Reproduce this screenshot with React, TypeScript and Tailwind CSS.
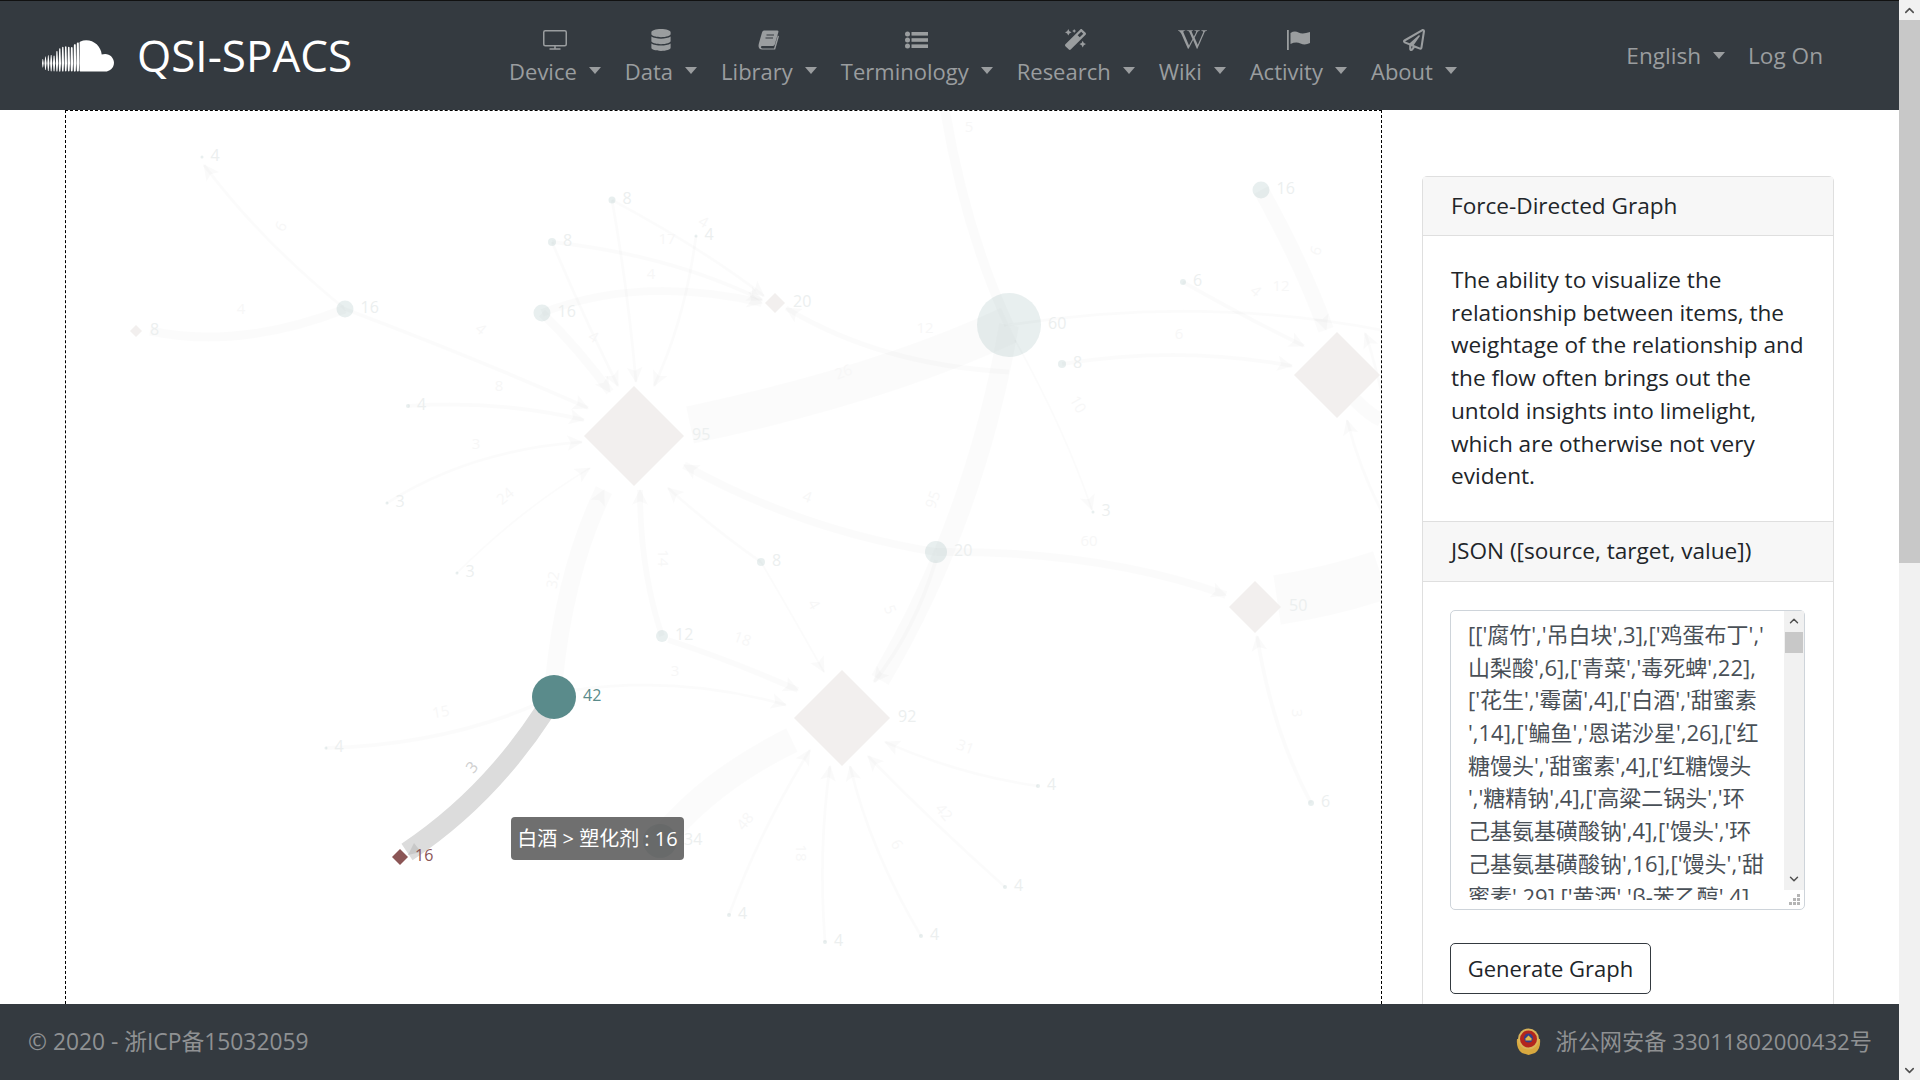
import { ChevronDown, ChevronUp } from "lucide-react";
import type { ReactNode } from "react";
import { FaDatabase, FaMagic, FaRegPaperPlane, FaSoundcloud, FaWikipediaW } from "react-icons/fa";

const DesktopIcon = () => (
    <svg width="24" height="20" viewBox="0 0 24 20" fill="none" stroke="currentColor">
        <rect x="0.75" y="0.75" width="22.5" height="15" rx="1.5" strokeWidth="1.5" />
        <path d="M12 16v2.5M6.5 19h11" strokeWidth="1.6" />
    </svg>
);

const BookIcon = () => (
    <svg width="21" height="20" viewBox="0 0 21 20" fill="currentColor">
        <path d="M6 .5H19.2Q20.8 .5 20.4 2L16.8 14.6Q16.4 16 15 16H4.2Q2.6 16 3 17.4 3.4 18.5 4.6 18.5H16L19.8 5.4 21 6.2 17.2 19.5H4Q1 19.5 .6 16.5 .4 15 1 13L4 2.5Q4.6 .5 6 .5Z" />
        <path d="M8.5 5H16M7.5 8H15" stroke="#343a40" strokeWidth="1.2" />
    </svg>
);

const ListIcon = () => (
    <svg width="23" height="18" viewBox="0 0 23 18" fill="currentColor">
        <circle cx="2.5" cy="3" r="2.5" />
        <circle cx="2.5" cy="9" r="2.5" />
        <circle cx="2.5" cy="15" r="2.5" />
        <rect x="6.5" y="1" width="16.5" height="3.6" />
        <rect x="6.5" y="7.2" width="16.5" height="3.6" />
        <rect x="6.5" y="13.4" width="16.5" height="3.6" />
    </svg>
);

const FlagIcon = () => (
    <svg width="23" height="20" viewBox="0 0 23 20" fill="currentColor">
        <rect x="0" y="0" width="1.8" height="20" />
        <path d="M3.5 3Q7.5 .5 11.5 2.5T23 2V13Q18 15.5 13.5 13.5T3.5 14Z" />
    </svg>
);

const PoliceBadge = () => (
    <svg width="25" height="27" viewBox="0 0 25 27">
        <path d="M1 11Q0 21 6 25L12.5 27 19 25Q25 21 24 11Z" fill="#d8a83f" />
        <circle cx="12.5" cy="11" r="10.5" fill="#d9b45a" />
        <circle cx="12.5" cy="11" r="8.5" fill="#b3261e" />
        <circle cx="12.5" cy="10" r="4.5" fill="#33408c" />
        <path d="M9.5 12.5h6v-2l-3-3-3 3Z" fill="#e2b94a" />
    </svg>
);

const navItems: { label: string; icon: ReactNode }[] = [
    { label: "Device", icon: <DesktopIcon /> },
    { label: "Data", icon: <FaDatabase size={22} /> },
    { label: "Library", icon: <BookIcon /> },
    { label: "Terminology", icon: <ListIcon /> },
    { label: "Research", icon: <FaMagic size={21} /> },
    { label: "Wiki", icon: <FaWikipediaW size={29} /> },
    { label: "Activity", icon: <FlagIcon /> },
    { label: "About", icon: <FaRegPaperPlane size={22} /> },
];

const Caret = () => (
    <span className="ml-3 inline-block h-0 w-0 border-x-[6px] border-t-[7px] border-x-transparent border-t-current" />
);

// edges of the faded graph: x1 y1 cx cy x2 y2 width arrow
const edges: [number, number, number, number, number, number, number, boolean][] = [
    [345, 309, 240, 350, 150, 331, 9, false],
    [345, 309, 260, 240, 204, 165, 3, true],
    [345, 309, 480, 360, 588, 408, 4, true],
    [612, 200, 628, 290, 636, 382, 3, true],
    [612, 200, 705, 250, 764, 296, 3, true],
    [696, 236, 685, 320, 654, 386, 3, true],
    [552, 242, 585, 320, 618, 386, 3, true],
    [552, 242, 670, 255, 762, 300, 4, true],
    [542, 313, 640, 275, 762, 303, 8, true],
    [542, 313, 580, 350, 610, 392, 9, true],
    [408, 406, 500, 400, 584, 420, 4, true],
    [387, 503, 470, 450, 582, 442, 3, true],
    [457, 573, 520, 510, 590, 468, 2, true],
    [554, 680, 565, 570, 604, 490, 18, true],
    [662, 636, 640, 570, 640, 490, 6, true],
    [761, 562, 715, 530, 668, 488, 3, true],
    [936, 552, 800, 530, 684, 465, 8, true],
    [690, 425, 880, 385, 1009, 325, 38, false],
    [1009, 325, 975, 520, 880, 680, 20, false],
    [945, 110, 965, 230, 1009, 325, 10, false],
    [1009, 372, 880, 365, 786, 308, 5, true],
    [1015, 340, 1065, 430, 1092, 510, 2, true],
    [1009, 325, 1200, 295, 1381, 330, 3, false],
    [1062, 364, 1180, 345, 1292, 366, 4, true],
    [1183, 282, 1250, 320, 1304, 346, 4, true],
    [1261, 190, 1305, 270, 1326, 330, 16, true],
    [936, 552, 1100, 550, 1226, 595, 8, true],
    [1277, 600, 1330, 592, 1381, 575, 50, false],
    [1311, 803, 1272, 730, 1257, 636, 4, true],
    [936, 560, 915, 630, 874, 682, 4, true],
    [575, 690, 680, 675, 786, 705, 3, true],
    [668, 640, 730, 660, 798, 690, 6, true],
    [761, 562, 795, 620, 824, 672, 2, true],
    [660, 841, 710, 780, 792, 740, 26, false],
    [326, 748, 440, 745, 535, 705, 4, false],
    [1038, 786, 960, 775, 885, 742, 3, true],
    [1005, 887, 930, 820, 868, 756, 3, true],
    [921, 936, 870, 850, 850, 766, 3, true],
    [825, 942, 818, 850, 830, 766, 3, true],
    [729, 915, 760, 830, 810, 750, 3, true],
    [1381, 510, 1360, 470, 1347, 420, 3, true],
    [1381, 390, 1370, 345, 1365, 333, 3, true],
    [1381, 420, 1370, 415, 1355, 400, 14, false],
];

const circles: [number, number, number, string][] = [
    [202, 157, 1.5, "4"],
    [345, 309, 8.5, "16"],
    [612, 200, 3.5, "8"],
    [696, 236, 1.5, "4"],
    [552, 242, 4, "8"],
    [542, 313, 8.5, "16"],
    [408, 406, 2, "4"],
    [387, 503, 1.5, "3"],
    [457, 573, 1.5, "3"],
    [1009, 325, 32, "60"],
    [1062, 364, 4, "8"],
    [1261, 190, 8.5, "16"],
    [1183, 282, 3, "6"],
    [1093, 512, 1.5, "3"],
    [936, 552, 11, "20"],
    [1038, 786, 2, "4"],
    [1005, 887, 2, "4"],
    [921, 936, 2, "4"],
    [825, 942, 2, "4"],
    [729, 915, 2, "4"],
    [1311, 803, 3, "6"],
    [761, 562, 4, "8"],
    [662, 636, 6, "12"],
    [326, 748, 1.5, "4"],
    [660, 841, 17, "34"],
];

const diamonds: [number, number, number, string][] = [
    [136, 331, 6, "8"],
    [634, 436, 50, "95"],
    [775, 303, 10, "20"],
    [1337, 375, 43, ""],
    [842, 718, 48, "92"],
    [1255, 607, 26, "50"],
];

const edgeLabels: [number, number, string, number][] = [
    [282, 227, "6", -60],
    [241, 310, "4", 0],
    [480, 330, "4", 40],
    [499, 387, "8", 0],
    [476, 445, "3", 0],
    [506, 497, "24", -40],
    [667, 240, "17", 0],
    [703, 223, "4", 30],
    [651, 275, "4", 0],
    [593, 338, "4", 30],
    [925, 329, "12", 0],
    [844, 373, "26", -20],
    [969, 128, "5", 0],
    [1077, 405, "10", 60],
    [934, 500, "95", -70],
    [807, 498, "4", 20],
    [1179, 335, "6", 0],
    [1317, 251, "6", -70],
    [1281, 287, "12", 0],
    [1255, 292, "4", 40],
    [554, 580, "32", -80],
    [662, 558, "14", 90],
    [742, 640, "18", 20],
    [675, 672, "3", 0],
    [441, 713, "15", -10],
    [813, 605, "4", 60],
    [889, 610, "5", 70],
    [965, 748, "31", 20],
    [746, 822, "48", -50],
    [800, 853, "18", 90],
    [896, 845, "6", 60],
    [943, 813, "42", 50],
    [1089, 542, "60", 0],
    [1296, 713, "3", 90],
];

const GraphDrawing = () => (
    <svg className="block h-full w-full" viewBox="66 111 1315 893">
        <defs>
            <marker id="arrow" viewBox="0 0 14 14" refX="13" refY="7" markerWidth="16" markerHeight="16" markerUnits="userSpaceOnUse" orient="auto">
                <path d="M0 0L14 7 0 14 3 7Z" fill="#000" fillOpacity="0.02" />
            </marker>
        </defs>
        {edges.map(([x1, y1, cx, cy, x2, y2, w, arrow]) => (
            <path
                key={`${x1}-${y1}-${x2}-${y2}`}
                d={`M${x1} ${y1}Q${cx} ${cy} ${x2} ${y2}`}
                fill="none"
                stroke="#000"
                strokeOpacity="0.016"
                strokeWidth={w}
                markerEnd={arrow ? "url(#arrow)" : undefined}
            />
        ))}
        {edgeLabels.map(([x, y, t, r]) => (
            <text key={`${x}-${y}`} x={x} y={y} fontSize="15" fill="#f7f7f7" textAnchor="middle" dominantBaseline="middle" transform={`rotate(${r} ${x} ${y})`}>
                {t}
            </text>
        ))}
        <path d="M544 712Q488 798 407 852" fill="none" stroke="#dcdcdc" strokeWidth="20" />
        <path d="M414 843L408 855 421 852Z" fill="#c8c8c8" />
        <text x="473" y="768" fontSize="16" fill="#cfcfcf" textAnchor="middle" dominantBaseline="middle" transform="rotate(-50 473 768)">
            3
        </text>
        {circles.map(([x, y, r, t]) => (
            <g key={`${x}-${y}`}>
                <circle cx={x} cy={y} r={r} fill="#5a8b8b" fillOpacity="0.14" />
                <text x={x + r + 7} y={y} fontSize="16" fill="#ecefef" dominantBaseline="middle">
                    {t}
                </text>
            </g>
        ))}
        {diamonds.map(([x, y, s, t]) => (
            <g key={`${x}-${y}`}>
                <path d={`M${x} ${y - s}L${x + s} ${y} ${x} ${y + s} ${x - s} ${y}Z`} fill="#f2efee" />
                <text x={x + s + 8} y={y} fontSize="16" fill="#ecefef" dominantBaseline="middle">
                    {t}
                </text>
            </g>
        ))}
        <circle cx="554" cy="697" r="22" fill="#5a8b8b" />
        <text x="583" y="697" fontSize="16" fill="#5a8b8b" dominantBaseline="middle">
            42
        </text>
        <path d="M400 849L408 857 400 865 392 857Z" fill="#8b5555" />
        <text x="415" y="857" fontSize="16" fill="#8b5555" dominantBaseline="middle">
            16
        </text>
    </svg>
);

const jsonLines = [
    "[['腐竹','吊白块',3],['鸡蛋布丁','",
    "山梨酸',6],['青菜','毒死蜱',22],",
    "['花生','霉菌',4],['白酒','甜蜜素",
    "',14],['鳊鱼','恩诺沙星',26],['红",
    "糖馒头','甜蜜素',4],['红糖馒头",
    "','糖精钠',4],['高粱二锅头','环",
    "己基氨基磺酸钠',4],['馒头','环",
    "己基氨基磺酸钠',16],['馒头','甜",
    "蜜素',29],['黄酒','β-苯乙醇',4]",
];

const JsonBox = () => (
    <div className="relative flex h-[300px] w-[355px] rounded-[5px] border border-[#ced4da] bg-white">
        <div className="mt-[7px] ml-[17px] h-[282px] flex-1 overflow-hidden leading-[32.7px] text-[#495057]">
            {jsonLines.map((line) => (
                <div key={line} className="whitespace-nowrap">
                    {line}
                </div>
            ))}
        </div>
        <div className="flex h-[279px] w-[20px] flex-col items-center justify-between bg-[#f1f1f1] text-[#505050]">
            <div className="w-full">
                <div className="flex h-[21px] items-center justify-center">
                    <ChevronUp size={14} strokeWidth={2.5} />
                </div>
                <div className="mx-[1px] h-[21px] bg-[#c8c8c8]" />
            </div>
            <div className="flex h-[21px] items-center justify-center">
                <ChevronDown size={14} strokeWidth={2.5} />
            </div>
        </div>
        <svg className="absolute right-[3px] bottom-[3px]" width="12" height="12" viewBox="0 0 12 12" fill="#b5b5b5">
            <rect x="8" y="0" width="3" height="3" />
            <rect x="4" y="4" width="3" height="3" />
            <rect x="8" y="4" width="3" height="3" />
            <rect x="0" y="8" width="3" height="3" />
            <rect x="4" y="8" width="3" height="3" />
            <rect x="8" y="8" width="3" height="3" />
        </svg>
    </div>
);

const SidePanel = () => (
    <div className="mt-[66px] ml-[40px] w-[412px] shrink-0 self-start rounded-[5px] border border-[#dfdfdf] text-[22px] text-[#212529]">
        <div className="flex h-[59px] items-center border-b border-[#dfdfdf] bg-[#f7f7f7] px-7 text-[22.6px]">Force-Directed Graph</div>
        <p className="px-7 pt-[28px] pb-[28px] text-[22.6px] leading-[32.7px]">
            The ability to visualize the relationship between items, the weightage of the relationship and the flow often brings out the untold insights into limelight, which are otherwise not very evident.
        </p>
        <div className="flex h-[61px] items-center border-y border-[#dfdfdf] bg-[#f7f7f7] px-7 text-[22.6px]">JSON ([source, target, value])</div>
        <div className="pt-7 pr-[26px] pb-8 pl-[27px]">
            <JsonBox />
            <button className="mt-[33px] h-[51px] w-[201px] rounded-[5px] border border-[#343a40] bg-white text-center">Generate Graph</button>
        </div>
    </div>
);

const PageScrollbar = () => (
    <div className="flex h-screen w-[21px] shrink-0 flex-col justify-between bg-[#f1f1f1] text-[#505050]">
        <div>
            <div className="flex h-[20px] items-center justify-center">
                <ChevronUp size={15} strokeWidth={2.5} />
            </div>
            <div className="h-[543px] bg-[#c8c8c8]" />
        </div>
        <div className="flex h-[20px] items-center justify-center">
            <ChevronDown size={15} strokeWidth={2.5} />
        </div>
    </div>
);

export default function App() {
    return (
        <div className="flex h-screen overflow-hidden bg-white font-['Open_Sans','Noto_Sans_CJK_SC',sans-serif]">
            <div className="flex min-w-0 flex-1 flex-col">
                <header className="flex h-[110px] shrink-0 items-center border-t border-[#111] bg-[#343a40] pr-[76px] pl-[42px] text-[22px] text-[#9a9d9f]">
                    <FaSoundcloud size={72} className="text-white" />
                    <span className="ml-[23px] -translate-y-px text-[44px] text-white">QSI-SPACS</span>
                    <nav className="ml-[145px] flex">
                        {navItems.map((item) => (
                            <div key={item.label} className="flex flex-col items-center px-3">
                                <div className="flex h-[30px] items-center pt-[2px]">{item.icon}</div>
                                <div className="flex items-center leading-[34px]">
                                    {item.label}
                                    <Caret />
                                </div>
                            </div>
                        ))}
                    </nav>
                    <div className="ml-auto flex items-center text-[22.6px]">
                        English
                        <Caret />
                        <span className="ml-[23px]">Log On</span>
                    </div>
                </header>
                <main className="flex min-h-0 flex-1 overflow-hidden pl-[65px]">
                    <div className="relative h-full w-[1317px] shrink-0 border-x border-t border-dashed border-black">
                        <GraphDrawing />
                        <div className="absolute top-[706px] left-[445px] flex h-[43px] w-[173px] items-center justify-center rounded-[4px] bg-[rgba(50,50,50,0.7)] text-[20px] whitespace-nowrap text-white">
                            白酒 &gt; 塑化剂 : 16
                        </div>
                    </div>
                    <SidePanel />
                </main>
                <footer className="flex h-[76px] shrink-0 items-center justify-between bg-[#343a40] pr-[27px] pl-7 text-[22.8px] text-[#8f9193]">
                    <span>© 2020 - 浙ICP备15032059</span>
                    <span className="flex items-center gap-[15px] text-[22.2px]">
                        <PoliceBadge />
                        浙公网安备 33011802000432号
                    </span>
                </footer>
            </div>
            <PageScrollbar />
        </div>
    );
}
